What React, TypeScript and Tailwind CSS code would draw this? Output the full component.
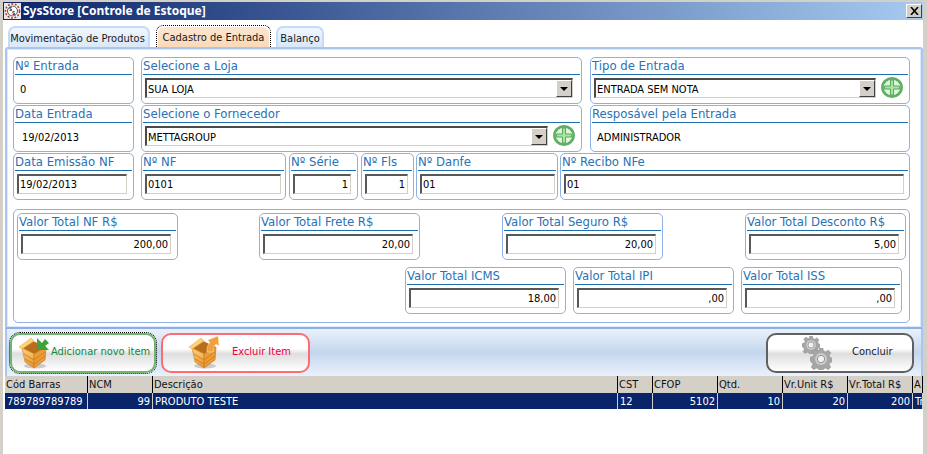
import type { ReactNode } from "react";

const tableCols = [
  { title: "Cód Barras", w: "w-[83px]", value: "789789789789", right: false },
  { title: "NCM", w: "w-[65px]", value: "99", right: true },
  { title: "Descrição", w: "w-[465px]", value: "PRODUTO TESTE", right: false },
  { title: "CST", w: "w-[35px]", value: "12", right: false },
  { title: "CFOP", w: "w-[65px]", value: "5102", right: true },
  { title: "Qtd.", w: "w-[65px]", value: "10", right: true },
  { title: "Vr.Unit R$", w: "w-[65px]", value: "20", right: true },
  { title: "Vr.Total R$", w: "w-[65px]", value: "200", right: true },
  { title: "A", w: "w-[10px]", value: "Tr", right: false },
];

function Box({
  title,
  width,
  children,
}: {
  title: string;
  width: string;
  children: ReactNode;
}) {
  return (
    <div
      className={`${width} h-[47px] shrink-0 flex flex-col rounded-[5px] border border-[#8eb0e4] bg-white px-[1px]`}
    >
      <div className="h-[17px] border-b border-[#1d6fb0] text-[13px] leading-[15px] whitespace-nowrap text-[#2a71b5]">
        {title}
      </div>
      {children}
    </div>
  );
}

function Field({ value, right, width }: { value: string; right?: boolean; width: string }) {
  return (
    <div
      className={`${width} mt-[3px] ml-[2px] h-[20px] border-2 border-t-[#585858] border-l-[#585858] border-r-[#d4d0c8] border-b-[#d4d0c8] border-r-[1px] border-b-[1px] px-[1px] text-[11px] leading-[18px] text-black ${right ? "text-right pr-[2px]" : ""}`}
    >
      {value}
    </div>
  );
}

function Select({ value, width }: { value: string; width: string }) {
  return (
    <div
      className={`${width} mt-[3px] ml-[2px] h-[20px] flex border-2 border-t-[#4a4a4a] border-l-[#4a4a4a] border-r-[#d4d0c8] border-b-[#d4d0c8] border-r-[1px] border-b-[1px]`}
    >
      <div className="flex-1 pl-[1px] text-[11px] leading-[19px] text-black whitespace-nowrap">{value}</div>
      <div className="w-[16px] h-[17px] flex items-center justify-center bg-[#d4d0c8] border border-t-white border-l-white border-r-[#404040] border-b-[#404040]">
        <div className="w-0 h-0 border-x-[4px] border-x-transparent border-t-[4px] border-t-black" />
      </div>
    </div>
  );
}

function PlusIcon() {
  return (
    <svg width="22" height="21" viewBox="0 0 22 21" className="mt-[2px] ml-[5px] shrink-0">
      <ellipse cx="11" cy="10.5" rx="9.6" ry="9.1" fill="#dff2dc" stroke="#5fae62" strokeWidth="2.6" />
      <path d="M9.500 3h3v6h6v3h-6v6h-3v-6h-6V9h6z" fill="#a8e6a0" stroke="#5aa95e" strokeWidth="1" />
    </svg>
  );
}

function CrateIcon({ arrow, dir, id }: { arrow: string; dir: "in" | "out"; id: string }) {
  return (
    <svg width="34" height="35" viewBox="0 0 34 35">
      <defs>
        <linearGradient id={id} x1="0" y1="0" x2="0" y2="1">
          <stop offset="0" stopColor="#fcd27a" />
          <stop offset="1" stopColor="#e8912a" />
        </linearGradient>
      </defs>
      <ellipse cx="17" cy="31" rx="11" ry="2.500" fill="#a8a8a8" opacity="0.55" />
      <path d="M4 13 L15 6 L28 12 L16 19 Z" fill="#b86f1c" />
      <path d="M4 13 L16 19 L16 33 L7 27 Z" fill={`url(#${id})`} stroke="#d98a25" strokeWidth="0.7" />
      <path d="M16 19 L28 12 L27 25 L16 33 Z" fill="#eb9c34" stroke="#c67c1e" strokeWidth="0.7" />
      <path d="M1 12 L13 3 L16 6 L4 14 Z" fill="#fdd27c" stroke="#e9a23c" strokeWidth="0.5" />
      <path d="M6 19 L16 25 M7 24 L16 29 M16 25 L27 17 M16 29 L27 21" stroke="#c97f20" strokeWidth="0.9" />
      {dir === "in" ? (
        <path d="M19 3 L24 8 L27 4 L31 8 L27 11 L31 15 L19 15 Z" fill={arrow} />
      ) : (
        <path d="M19 17 C19 12 20 9 22 8 L20 5 L30 1 L31 11 L28 9 C26 11 25 14 25 17 Z" fill={arrow} stroke="#fbe0ae" strokeWidth="0.6" />
      )}
    </svg>
  );
}

function Gear({ size, className }: { size: number; className?: string }) {
  return (
    <svg width={size} height={size} viewBox="0 0 24 24" className={className}>
      <path
        d="M10 0h4l.7 3.200 2.400 1 2.800-1.800 2.800 2.800-1.800 2.800 1 2.400 3.100.6v4l-3.100.7-1 2.400 1.800 2.700-2.800 2.800-2.800-1.800-2.400 1-.7 3.200h-4l-.7-3.200-2.400-1-2.800 1.800-2.800-2.800 1.800-2.700-1-2.400L0 14v-4l3.100-.6 1-2.400-1.800-2.800 2.800-2.800 2.800 1.800 2.400-1z"
        fill="#a6a6a6"
        stroke="#8a8a8a"
        strokeWidth="0.5"
      />
      <circle cx="12" cy="12" r="6.500" fill="#cdcdcd" />
      <circle cx="12" cy="12" r="4" fill="#f2f2f2" stroke="#777777" strokeWidth="0.8" />
    </svg>
  );
}

function ActionButton({
  border,
  width,
  children,
}: {
  border: string;
  width: string;
  children: ReactNode;
}) {
  return (
    <div
      className={`${width} ${border} h-[40px] flex items-center rounded-[10px] border-2 bg-[linear-gradient(to_bottom,#ffffff_0%,#ffffff_38%,#dedede_52%,#f0f0f0_78%,#ffffff_100%)]`}
    >
      {children}
    </div>
  );
}

export default function App() {
  return (
    <div className="w-[927px] h-[454px] overflow-hidden flex flex-col bg-[#d4d0c8] pt-[2px] pl-[3px] pr-[4px] [font-family:'DejaVu_Sans_Condensed','DejaVu_Sans',sans-serif]">
      <div className="h-[18px] shrink-0 flex items-center justify-between bg-[linear-gradient(to_right,#0a246a,#a6caf0)] pl-[1px] pr-[1px]">
        <div className="flex items-center gap-[2px]">
          <svg width="17" height="16" viewBox="0 0 17 16">
            <rect width="17" height="16" fill="#ffffff" opacity="0.9" />
            <circle cx="8.500" cy="8" r="7" fill="#ffffff" stroke="#b03a2e" strokeWidth="1.600" strokeDasharray="2 1.500" />
            <circle cx="8.500" cy="8" r="5" fill="#ffffff" stroke="#222222" strokeWidth="0.800" />
            <text x="5" y="8" fontSize="5" fontWeight="700" fill="#111111">S</text>
            <text x="8" y="12" fontSize="5" fontWeight="700" fill="#111111">S</text>
          </svg>
          <span className="[font-family:'Noto_Sans',sans-serif] text-[12px] font-bold leading-[18px] text-white">SysStore [Controle de Estoque]</span>
        </div>
        <div className="w-[16px] h-[14px] flex items-center justify-center bg-[#d4d0c8] border border-t-white border-l-white border-r-[#404040] border-b-[#404040]">
          <svg width="9" height="8" viewBox="0 0 9 8">
            <path d="M1 0l7 8M8 0L1 8" stroke="#000000" strokeWidth="1.600" fill="none" />
          </svg>
        </div>
      </div>

      <div className="flex-1 flex flex-col bg-white pl-[2px]">
        <div className="h-[27px] shrink-0 flex items-end pl-[2px] text-[11px] text-[#1a1a1a]">
          <div className="ml-[1px] w-[142px] h-[21px] rounded-t-[7px] border-2 border-b-0 border-[#c4daf6] bg-[linear-gradient(to_bottom,#f0f6fe,#d9e7f8)] pr-[3px] text-center leading-[21px] whitespace-nowrap">
            Movimentação de Produtos
          </div>
          <div className="ml-[6px] w-[115px] h-[22px] rounded-t-[7px] border border-dotted border-b-0 border-black p-[1px] pb-0">
            <div className="h-[20px] rounded-t-[6px] bg-[linear-gradient(to_bottom,#fbe6d2,#fbd9b8)] text-center leading-[21px] whitespace-nowrap">
              Cadastro de Entrada
            </div>
          </div>
          <div className="ml-[5px] w-[48px] h-[21px] rounded-t-[7px] border-2 border-b-0 border-[#c4daf6] bg-[linear-gradient(to_bottom,#f0f6fe,#d9e7f8)] text-center leading-[21px]">
            Balanço
          </div>
        </div>

        <div className="h-[282px] shrink-0 rounded-t-[3px] border-2 border-[#a9c6ee] border-b-[#8eb0e4] bg-white pt-[8px] pl-[6px] shadow-[inset_0_0_0_1px_#dce9fb]">
          <div className="flex gap-[7px]">
            <Box title="Nº Entrada" width="w-[121px]">
              <div className="pl-[5px] pt-[6px] text-[11px] leading-[18px]">0</div>
            </Box>
            <Box title="Selecione a Loja" width="w-[441px]">
              <Select value="SUA LOJA" width="w-[428px]" />
            </Box>
            <div className="ml-[1px]">
              <Box title="Tipo de Entrada" width="w-[320px]">
                <div className="flex">
                  <Select value="ENTRADA SEM NOTA" width="w-[282px]" />
                  <PlusIcon />
                </div>
              </Box>
            </div>
          </div>

          <div className="mt-[1px] flex gap-[7px]">
            <Box title="Data Entrada" width="w-[121px]">
              <div className="pl-[7px] pt-[6px] text-[11px] leading-[18px]">19/02/2013</div>
            </Box>
            <Box title="Selecione o Fornecedor" width="w-[441px]">
              <div className="flex">
                <Select value="METTAGROUP" width="w-[403px]" />
                <PlusIcon />
              </div>
            </Box>
            <div className="ml-[1px]">
              <Box title="Resposável pela Entrada" width="w-[320px]">
                <div className="pl-[5px] pt-[6px] text-[11px] leading-[18px]">ADMINISTRADOR</div>
              </Box>
            </div>
          </div>

          <div className="mt-[1px] flex">
            <Box title="Data Emissão NF" width="w-[121px]">
              <Field value="19/02/2013" width="w-[110px]" />
            </Box>
            <div className="ml-[7px]">
              <Box title="Nº NF" width="w-[145px]">
                <Field value="0101" width="w-[136px]" />
              </Box>
            </div>
            <div className="ml-[3px]">
              <Box title="Nº Série" width="w-[69px]">
                <Field value="1" right width="w-[58px]" />
              </Box>
            </div>
            <div className="ml-[3px]">
              <Box title="Nº Fls" width="w-[53px]">
                <Field value="1" right width="w-[43px]" />
              </Box>
            </div>
            <div className="ml-[2px]">
              <Box title="Nº Danfe" width="w-[142px]">
                <Field value="01" width="w-[135px]" />
              </Box>
            </div>
            <div className="ml-[2px]">
              <Box title="Nº Recibo NFe" width="w-[350px]">
                <Field value="01" width="w-[340px]" />
              </Box>
            </div>
          </div>

          <div className="mt-[9px] h-[114px] w-[897px] rounded-[5px] border border-[#8eb0e4] pt-[3px] pl-[3px]">
            <div className="flex">
              <Box title="Valor Total NF R$" width="w-[161px]">
                <Field value="200,00" right width="w-[150px]" />
              </Box>
              <div className="ml-[81px]">
                <Box title="Valor Total Frete R$" width="w-[161px]">
                  <Field value="20,00" right width="w-[150px]" />
                </Box>
              </div>
              <div className="ml-[82px]">
                <Box title="Valor Total Seguro R$" width="w-[161px]">
                  <Field value="20,00" right width="w-[150px]" />
                </Box>
              </div>
              <div className="ml-[82px]">
                <Box title="Valor Total Desconto R$" width="w-[161px]">
                  <Field value="5,00" right width="w-[150px]" />
                </Box>
              </div>
            </div>
            <div className="mt-[7px] ml-[388px] flex gap-[7px]">
              <Box title="Valor Total ICMS" width="w-[161px]">
                <Field value="18,00" right width="w-[150px]" />
              </Box>
              <Box title="Valor Total IPI" width="w-[161px]">
                <Field value=",00" right width="w-[150px]" />
              </Box>
              <Box title="Valor Total ISS" width="w-[161px]">
                <Field value=",00" right width="w-[150px]" />
              </Box>
            </div>
          </div>
        </div>

        <div className="h-[47px] shrink-0 flex items-center border-x-2 border-[#a9c6ee] bg-[linear-gradient(to_bottom,#eaf1fc,#c4d7ee_50%,#eaf1fc)] pl-[2px] pr-[7px]">
          <div className="rounded-[11px] border border-dotted border-black">
            <ActionButton border="border-[#6fb56f]" width="w-[146px]">
              <div className="ml-[6px]">
                <CrateIcon arrow="#3fa33a" dir="in" id="crate-add" />
              </div>
              <span className="-ml-[1px] text-[11px] whitespace-nowrap text-[#0f8a3c]">Adicionar novo item</span>
            </ActionButton>
          </div>
          <div className="ml-[4px]">
            <ActionButton border="border-[#ff6b72]" width="w-[149px]">
              <div className="ml-[25px]">
                <CrateIcon arrow="#f0a03c" dir="out" id="crate-del" />
              </div>
              <span className="ml-[10px] text-[11px] whitespace-nowrap text-[#f0003c]">Excluir Item</span>
            </ActionButton>
          </div>
          <div className="ml-auto">
            <ActionButton border="border-[#606060]" width="w-[148px]">
              <div className="ml-[34px] w-[32px] h-[34px] flex flex-col">
                <Gear size={18} />
                <Gear size={22} className="-mt-[6px] ml-[8px]" />
              </div>
              <span className="ml-[18px] text-[11px] text-[#1a1a2a]">Concluir</span>
            </ActionButton>
          </div>
        </div>

        <div className="flex-1 overflow-hidden">
          <div className="flex h-[17px] bg-[#d4d0c8] text-[11px] leading-[18px] text-[#111111]">
            {tableCols.map((c) => (
              <div key={c.title} className={`${c.w} shrink-0 border-r border-black pl-[1px] whitespace-nowrap overflow-hidden`}>
                {c.title}
              </div>
            ))}
          </div>
          <div className="flex h-[16px] bg-[#0a246a] text-[11px] leading-[18px] text-white">
            {tableCols.map((c) => (
              <div
                key={c.title}
                className={`${c.w} shrink-0 border-r border-[#d4d0c8] px-[2px] whitespace-nowrap overflow-hidden ${c.right ? "text-right" : ""}`}
              >
                {c.value}
              </div>
            ))}
          </div>
        </div>
      </div>
    </div>
  );
}
